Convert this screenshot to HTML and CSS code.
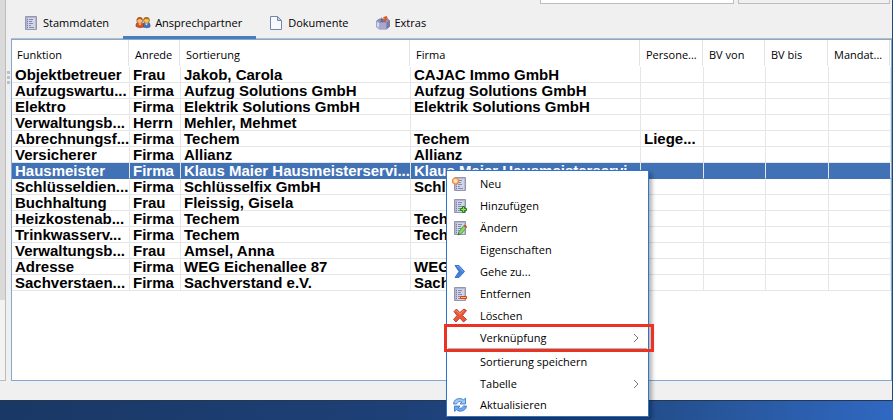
FILE: index.html
```html
<!DOCTYPE html>
<html lang="de">
<head>
<meta charset="utf-8">
<title>Ansprechpartner</title>
<link rel="stylesheet" href="styles.css">
</head>
<body>
<svg class="symbols" aria-hidden="true">
  <symbol id="sheet" viewBox="0 0 16 16">
    <path d="M2.500 1.500h11v13h-11z" fill="#d3d5e6" stroke="#9596ae"/>
    <path d="M3 2h2v12H3z" fill="#b4b6cf"/>
    <path d="M12 2h1v12h-1z" fill="#b9bbd4"/>
    <path d="M3 2.500h10" stroke="#b4b6cf"/>
    <path d="M4 4.500h1M4 6.500h1M4 8.500h1M4 10.500h1M4 12.500h1" stroke="#8183a3"/>
    <path d="M6 4.500h4M6 6.500h3M6 8.500h4M6 10.500h2M6 12.500h5" stroke="#7f8db0"/>
  </symbol>
</svg>
<div class="window">
  <div class="tree-edge"><div class="thumb"></div></div>
  <div class="splitter"><i></i><i></i><i></i></div>
  <main class="pane">
    <div class="fields">
      <input class="field wide" type="text" aria-label="Suche">
      <input class="field" type="text" aria-label="Filter" disabled>
    </div>
    <div class="tabs" role="tablist">
      <button class="tab" role="tab"><svg class="icon"><use href="#sheet"/></svg>Stammdaten</button>
      <button class="tab active" role="tab" aria-selected="true"><svg class="icon" viewBox="0 0 16 16">
        <path d="M8 12V9.500q0-2 2.500-2h2q2.500 0 2.500 2.500v2q-3 1.500-7 0z" fill="#3f74c6" stroke="#2a4f94" stroke-width=".6"/>
        <path d="M1 11.500V10q0-2.500 2.500-2.500h2.500q2 0 2.500 2.500v2q-4 1.500-7.500-.5z" fill="#d95030" stroke="#9b2f1d" stroke-width=".6"/>
        <circle cx="11.500" cy="5.500" r="2.900" fill="#f3c25d" stroke="#92601f" stroke-width=".8"/>
        <path d="M8.500 5q0-3 3-3t3 3q-2-1.500-4-1z" fill="#a9701f"/>
        <circle cx="4.700" cy="5.700" r="2.900" fill="#f7bd72" stroke="#9b5a25" stroke-width=".8"/>
        <path d="M1.700 5.500q0-3.500 3-3.500t3 3q-2-1-3.500-1z" fill="#b35a22"/>
        <path d="M3.500 8.500l1.500 2 1.500-2z" fill="#ffd9a0"/><path d="M10 8.500l1.500 2 1.500-2z" fill="#ffe1a0"/>
      </svg>Ansprechpartner</button>
      <button class="tab" role="tab"><svg class="icon" viewBox="0 0 16 16">
        <path d="M2.500 1.500h7l4 4v9h-11z" fill="#f6faff" stroke="#7388a8"/>
        <path d="M9.500 1.500v4h4z" fill="#c4d4ea" stroke="#7388a8"/>
      </svg>Dokumente</button>
      <button class="tab" role="tab"><svg class="icon" viewBox="0 0 16 16">
        <path d="M1.500 6l3-2h8L14.500 5.500v6L11.500 14H4.500L1.500 12z" fill="#8f92bd" stroke="#6e7198" stroke-width=".8"/>
        <path d="M1.500 6l3 2v6l-3-2z" fill="#c3c5e2"/>
        <path d="M4.500 8h7v6h-7z" fill="#a5a8d0"/>
        <path d="M11.500 8l3-2.500v6L11.500 14z" fill="#777aa6"/>
        <path d="M5.500 7l.5-4.500 2 .5V7z" fill="#4a72c8"/>
        <path d="M8 7l.5-5 3-1 1.500 2.500-2 .5v3z" fill="#df5629"/>
        <path d="M6.500 3.500h3" stroke="#f3a440"/><path d="M3 8v3" stroke="#f2f3ff"/>
      </svg>Extras</button>
    </div>
    <div class="list">
      <table>
        <colgroup><col class="c-role"><col class="c-title"><col><col><col class="c-mid"><col class="c-small"><col class="c-mid"><col class="c-small"></colgroup>
        <thead><tr><th><span>Funktion</span></th><th><span>Anrede</span></th><th><span>Sortierung</span></th><th><span>Firma</span></th><th><span>Persone...</span></th><th><span>BV von</span></th><th><span>BV bis</span></th><th><span>Mandat...</span></th></tr></thead>
        <tbody>
          <tr><td>Objektbetreuer</td><td>Frau</td><td>Jakob, Carola</td><td>CAJAC Immo GmbH</td><td></td><td></td><td></td><td></td></tr>
          <tr><td>Aufzugswartu...</td><td>Firma</td><td>Aufzug Solutions GmbH</td><td>Aufzug Solutions GmbH</td><td></td><td></td><td></td><td></td></tr>
          <tr><td>Elektro</td><td>Firma</td><td>Elektrik Solutions GmbH</td><td>Elektrik Solutions GmbH</td><td></td><td></td><td></td><td></td></tr>
          <tr><td>Verwaltungsb...</td><td>Herrn</td><td>Mehler, Mehmet</td><td></td><td></td><td></td><td></td><td></td></tr>
          <tr><td>Abrechnungsf...</td><td>Firma</td><td>Techem</td><td>Techem</td><td>Liege...</td><td></td><td></td><td></td></tr>
          <tr><td>Versicherer</td><td>Firma</td><td>Allianz</td><td>Allianz</td><td></td><td></td><td></td><td></td></tr>
          <tr class="selected"><td>Hausmeister</td><td>Firma</td><td>Klaus Maier Hausmeisterservi...</td><td>Klaus Maier Hausmeisterservi...</td><td></td><td></td><td></td><td></td></tr>
          <tr><td>Schlüsseldien...</td><td>Firma</td><td>Schlüsselfix GmbH</td><td>Schlüsselfix GmbH</td><td></td><td></td><td></td><td></td></tr>
          <tr><td>Buchhaltung</td><td>Frau</td><td>Fleissig, Gisela</td><td></td><td></td><td></td><td></td><td></td></tr>
          <tr><td>Heizkostenab...</td><td>Firma</td><td>Techem</td><td>Techem</td><td></td><td></td><td></td><td></td></tr>
          <tr><td>Trinkwasserv...</td><td>Firma</td><td>Techem</td><td>Techem</td><td></td><td></td><td></td><td></td></tr>
          <tr><td>Verwaltungsb...</td><td>Frau</td><td>Amsel, Anna</td><td></td><td></td><td></td><td></td><td></td></tr>
          <tr><td>Adresse</td><td>Firma</td><td>WEG Eichenallee 87</td><td>WEG Eichenallee 87</td><td></td><td></td><td></td><td></td></tr>
          <tr><td>Sachverstaen...</td><td>Firma</td><td>Sachverstand e.V.</td><td>Sachverstand e.V.</td><td></td><td></td><td></td><td></td></tr>
        </tbody>
      </table>
    </div>
  </main>
</div>
<div class="menu" role="menu">
  <button role="menuitem"><svg class="icon" viewBox="0 0 16 16"><use href="#sheet"/><circle cx="3.500" cy="5" r="3" fill="#ffd28a" stroke="#ec8650" stroke-width="1.200"/><circle cx="3.500" cy="5" r="1.200" fill="#fff4b8"/></svg>Neu</button>
  <button role="menuitem"><svg class="icon" viewBox="0 0 16 16"><use href="#sheet"/><path d="M10.500 8.500h2v2h2v2h-2v2h-2v-2h-2v-2h2z" fill="#8fe04f" stroke="#237a1b"/></svg>Hinzufügen</button>
  <button role="menuitem"><svg class="icon" viewBox="0 0 16 16"><use href="#sheet"/><path d="M6 15l1-3.500 5-6 2.500 2-5 6z" fill="#83dc5b" stroke="#3c8b34" stroke-width=".7"/><path d="M11.500 6L13 4.500l2 2L14 8z" fill="#d64a43"/><path d="M6 15l.5-2L8 14.300z" fill="#31553a"/></svg>Ändern</button>
  <button role="menuitem"><span class="icon"></span>Eigenschaften</button>
  <button role="menuitem"><svg class="icon" viewBox="0 0 16 16"><path d="M3 1.500H7L12.500 7.500 7 13.500H3L7 7.500z" fill="#3f82df" stroke="#2861b8" stroke-width=".8"/><path d="M5 2.500h1.500L11 7.500" fill="none" stroke="#8bb9f4" stroke-width=".8"/></svg>Gehe zu...</button>
  <button role="menuitem"><svg class="icon" viewBox="0 0 16 16"><use href="#sheet"/><path d="M8.500 10.500h6v2h-6z" fill="#ffc13b" stroke="#e03d25"/></svg>Entfernen</button>
  <button role="menuitem"><svg class="icon" viewBox="0 0 16 16"><path d="M2 3.500L4.500 1l3.300 3.500L12 1l2.500 1.500-4 5 4 4-3 2.500-3.700-4L4 14l-2.500-2.500L5 7.500z" fill="#e9583a" stroke="#ad2f1c" stroke-width=".8"/><path d="M3.500 3.500l1-1 3.300 3.500L12 2.500" fill="none" stroke="#ff9c80" stroke-width=".8"/></svg>Löschen</button>
  <button role="menuitem" class="sub marked"><span class="icon"></span>Verknüpfung<svg class="arrow" viewBox="0 0 6 10"><path d="M1 1l4 4-4 4"/></svg></button>
  <hr>
  <button role="menuitem"><span class="icon"></span>Sortierung speichern</button>
  <button role="menuitem" class="sub"><span class="icon"></span>Tabelle<svg class="arrow" viewBox="0 0 6 10"><path d="M1 1l4 4-4 4"/></svg></button>
  <button role="menuitem"><svg class="icon" viewBox="0 0 16 16"><path d="M1.500 7Q2 1.500 8 1.500q2 0 3.500 1.500L13.500 1v6H8l2-2Q6.500 3 4.500 7z" fill="#9cc9f7" stroke="#3271c4" stroke-width=".8"/><path d="M14.500 9Q14 14 8 14.200q-2 0-3.500-1.500l-2 1.800V9H8l-2 2q3.500 1.500 5.500-2z" fill="#6cabee" stroke="#3271c4" stroke-width=".8"/></svg>Aktualisieren</button>
</div>
</body>
</html>
```
FILE: styles.css
```css
* { box-sizing: border-box; }
body {
  margin: 0;
  height: 100vh;
  display: flex;
  flex-direction: column;
  padding-bottom: 19px;
  overflow: hidden;
  position: relative;
  font: 11px/16px "Open Sans", "Noto Sans", sans-serif;
  color: #000;
  background: linear-gradient(90deg, #1a3865, #1d4077 45%, #24508f 75%, #3069c2);
}
button { font: inherit; color: inherit; border: 0; background: none; padding: 0; }
.symbols { position: absolute; width: 0; height: 0; }
.icon { width: 16px; height: 16px; flex: none; }

.window {
  flex: 1;
  min-height: 0;
  display: flex;
  background: #f0f0f0;
  border-right: 1px solid #1f4a78;
  border-bottom: 1px solid #26384f;
}
.tree-edge {
  width: 6px;
  margin-bottom: 19px;
  background: #f3f3f3;
  border: solid #bcbcbc;
  border-width: 0 1px 1px 0;
}
.thumb { height: 79%; background: #dadada; }
.splitter {
  width: 5px;
  padding: 71px 1px 0;
  display: flex;
  flex-direction: column;
  gap: 2px;
}
.splitter i { width: 3px; height: 3px; background: #c0c0c0; }

.pane { flex: 1; min-width: 0; display: flex; flex-direction: column; margin-bottom: 19px; }
.fields {
  height: 4px;
  display: flex;
  justify-content: flex-end;
  align-items: flex-end;
  gap: 4px;
  padding-right: 2px;
}
.field { width: 152px; height: 22px; border: 1px solid #bdbdbd; background: #f0f0f0; }
.field.wide { width: 194px; background: #fff; }

.tabs { display: flex; height: 35px; border-bottom: 1px solid #bcbcbc; }
.tab { display: flex; align-items: center; gap: 4px; height: 35px; padding: 5px 14px 0 12px; border-bottom: 3px solid transparent; }
.tab.active { border-color: #4a7ebb; }

.list { flex: 1; min-height: 0; background: #fff; border: 1px solid #84a9d1; }
table { width: 100%; table-layout: fixed; border-collapse: separate; border-spacing: 0; }
.c-role { width: 118px; }
.c-title { width: 51px; }
.c-mid { width: 63px; }
.c-small { width: 62px; }
th { padding: 0 1px 1px 0; font-weight: 400; text-align: left; white-space: nowrap; }
th span { display: block; height: 26px; padding-left: 5px; line-height: 30px; border-right: 1px solid #e3e3e3; }
td {
  height: 16px;
  padding: 0 0 0 3px;
  font: bold 15px/15px "Liberation Sans", Arial, sans-serif;
  white-space: nowrap;
  border: solid #e6e6e6;
  border-width: 0 1px 1px 0;
}
.selected td { color: #fff; background: #4072b5; border-bottom-color: #4072b5; }

.menu {
  position: absolute;
  left: 446px;
  top: 170px;
  width: 203px;
  padding: 2px 1px 0;
  background: #fff;
  border: 1px solid #2e74cc;
  box-shadow: 3px 3px 4px rgba(0, 0, 0, .3);
}
.menu button { position: relative; display: flex; align-items: center; gap: 12px; width: 100%; height: 22px; padding: 0 8px 0 4px; text-align: left; }
.menu .sub { height: 21px; }
.arrow { width: 6px; height: 10px; margin-left: auto; fill: none; stroke: #777; }
.menu hr { height: 1px; margin: 0 0 2px; border: 0; background: #b5b5b5; }
.marked::after { content: ""; position: absolute; inset: -3px -7px -4px -4px; border: 3px solid #ec3323; }
```
